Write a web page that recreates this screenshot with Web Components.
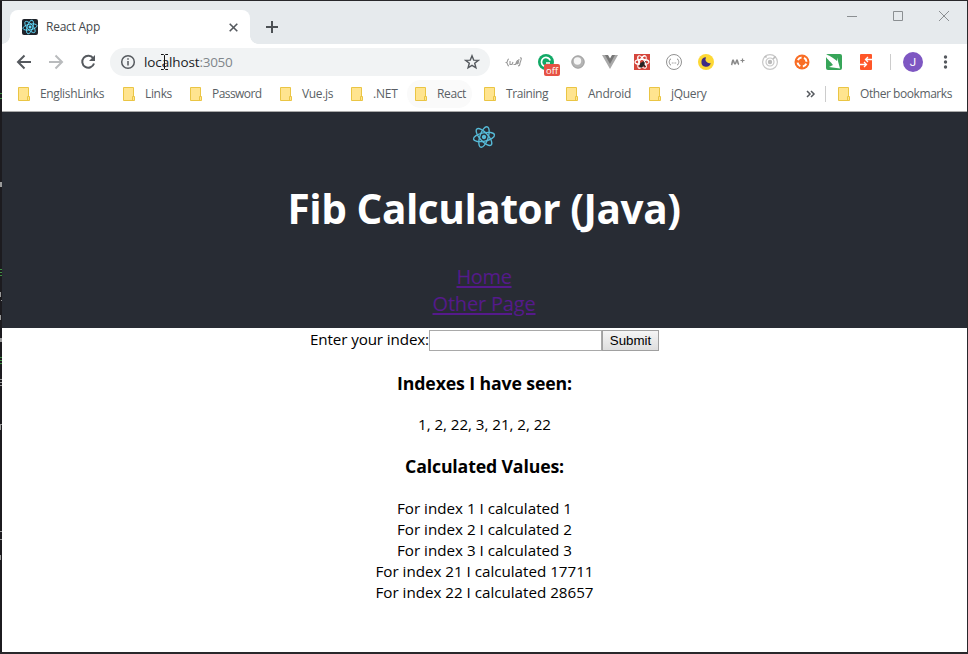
<!DOCTYPE html>
<html lang="en">
<head>
<meta charset="utf-8">
<title>React App</title>
<style>
html,body{margin:0;padding:0;width:968px;height:654px;overflow:hidden;background:#1e1e22;font-family:"Open Sans","Noto Sans",sans-serif}
</style>
</head>
<body>
<browser-window>
  <tab-strip slot="chrome"></tab-strip>
  <tool-bar slot="chrome"></tool-bar>
  <bookmark-bar slot="chrome"></bookmark-bar>
  <fib-app></fib-app>
</browser-window>
<script>
const define = (name, html, setup) => customElements.define(name, class extends HTMLElement {
  connectedCallback() {
    if (this.shadowRoot) return;
    const t = document.createElement('template');
    t.innerHTML = html;
    this.attachShadow({mode: 'open'}).append(t.content.cloneNode(true));
    if (setup) setup(this);
  }
});

/* One line of text, tracked so that it spans the width given in "w". */
define('fit-text', `<style>:host{display:inline-block;white-space:nowrap;vertical-align:top}span{display:inline-block;text-decoration:var(--line,none);text-decoration-thickness:2px;text-underline-offset:2px}</style><span><slot></slot></span>`, el => {
  const w = +el.getAttribute('w'), s = el.shadowRoot.querySelector('span');
  const n = el.textContent.length, natural = s.getBoundingClientRect().width;
  s.style.letterSpacing = ((w - natural) / n) + 'px';
  el.style.width = w + 'px';
});

define('react-logo', `<style>:host{display:block}svg{display:block;width:100%;height:100%}</style>
<svg viewBox="-12 -12 24 24" fill="none" stroke="#61dafb" stroke-width="1.35"><g transform="rotate(-12)"><circle r="2.2" fill="#61dafb" stroke="none"/><ellipse rx="10.7" ry="4.2"/><ellipse rx="10.7" ry="4.2" transform="rotate(60)"/><ellipse rx="10.7" ry="4.2" transform="rotate(120)"/></g></svg>`);

define('browser-window', `<style>
:host{display:grid;grid-template-columns:2px 965px 1px;grid-template-rows:1px 651px 2px;width:968px;height:654px;background:#29282b}
svg{grid-row:2;grid-column:1;display:block}
.win{grid-row:2;grid-column:2;display:flex;flex-direction:column;background:#fff;overflow:hidden}
</style>
<svg width="2" height="651" fill="#9a9a9a"><path fill="#1c1b1f" d="M0 0h2v651H0z"/><path fill="#3f8f43" d="M0 92h2v1H0zM0 97h2v1H0zM0 268h2v1H0zM0 271h2v1H0zM0 274h2v1H0zM0 356h2v1H0zM0 359h2v1H0zM0 362h2v1H0z"/><path d="M0 181h2v5H0zM0 291h1v5H0zM1 299h1v1H1zM0 314h1v5H0zM0 337h2v4H0zM0 378h2v1H0zM0 381h2v1H0zM0 384h2v1H0zM0 423h2v1H0zM0 424h1v5H0zM0 530h2v1H0zM0 538h2v1H0zM0 554h1v5H0z"/></svg>
<div class="win"><slot name="chrome"></slot><slot></slot></div>`);

define('tab-strip', `<style>
:host{display:flex;align-items:flex-end;height:43px;flex:none;background:#e6eaed;border-top:0}
.tab{margin-left:8px;width:240px;height:34px;box-sizing:border-box;background:#fff;border-radius:8px 8px 0 0;display:flex;align-items:center;padding:0 12px;position:relative;color:#45494d;font-size:12px;line-height:34px}
.tab:before,.tab:after{content:"";position:absolute;bottom:0;width:8px;height:8px}
.tab:before{left:-8px;background:radial-gradient(circle at 0 0,transparent 7.5px,#fff 8px)}
.tab:after{right:-8px;background:radial-gradient(circle at 100% 0,transparent 7.5px,#fff 8px)}
.fav{width:16px;height:16px;background:#20232a;border-radius:2px;margin-right:8px}
.close{margin-left:auto;display:block}
.plus{margin:0 0 10px 15px}
.ctl{margin-left:auto;align-self:flex-start;display:block}
</style>
<div class="tab"><react-logo class="fav"></react-logo><fit-text w="54">React App</fit-text>
<svg class="close" width="9" height="9" stroke="#55595e" stroke-width="1.6"><path d="M.7.7l7.6 7.6M8.3.7L.7 8.3"/></svg></div>
<svg class="plus" width="14" height="14" stroke="#4c5054" stroke-width="2"><path d="M7 1v12M1 7h12"/></svg>
<svg class="ctl" width="121" height="30" fill="none" stroke="#8b8f92"><path d="M1 15.5h10M47.5 10.5h9v9h-9zM93 10l10 10M103 10L93 20"/></svg>`);

define('extension-row', `<style>:host{display:flex}svg{display:block;width:32px;height:28px;flex:none;overflow:visible}text{font-family:"Open Sans",sans-serif}</style>
<svg viewBox="-16 -14 32 28" fill="none" stroke="#999" stroke-width="1.1"><path d="M-5-3c-2 0-1 3-2.500 3.500C-6 1-7 4-5 4M6-4c3-1 0 4 0 5 0 2-1 3-2 3M-4-1v3.500h2l1-2.500M-.5 2.500h2L3-1M3.500-2L3 2.500M5-3L4 2"/></svg>
<svg viewBox="-16 -14 32 28"><circle r="8" fill="#11a966"/><path d="M4.200-1.500A4.500 4.500 0 1 0 2 4M0 1h4" fill="none" stroke="#fff" stroke-width="1.700"/><rect x="-2" y="2" width="16" height="12" rx="2" fill="#e65244"/><text x="0" y="11.500" font-size="9.500" fill="#fff" textLength="12" lengthAdjust="spacingAndGlyphs">off</text></svg>
<svg viewBox="-16 -14 32 28"><circle r="6.500" fill="#b4b4b4"/><circle r="6.200" fill="none" stroke="#999" stroke-width=".8"/><circle cx="-.5" cy="-1" r="3.700" fill="#f6f6f6"/></svg>
<svg viewBox="-16 -14 32 28"><path d="M-8-7h4L0 0l4-7h4L0 7z" fill="#a9a9a9"/><path d="M-5-7h3L0-3.500 2-7h3L0 2z" fill="#777"/></svg>
<svg viewBox="-16 -14 32 28"><path d="M-8-8H8V8H-8z" fill="#d5453b"/><g fill="none" stroke="#fff" stroke-width="1.200"><ellipse rx="7" ry="2.600"/><ellipse rx="7" ry="2.600" transform="rotate(60)"/><ellipse rx="7" ry="2.600" transform="rotate(120)"/></g><ellipse cx="1.500" cy="2.500" rx="2" ry="3" transform="rotate(35)" fill="#222"/><path d="M-2 1l6 4M4-1L-1 5M1-1l2 6" stroke="#222" stroke-width=".8"/></svg>
<svg viewBox="-16 -14 32 28" fill="none" stroke="#929292"><circle r="7.500"/><path d="M-3-3c-2 0-1 2.500-2.200 3C-4 .5-5 3-3 3M3-3c2 0 1 2.500 2.200 3C4 .5 5 3 3 3M-2.200 1h1M-.5 1h1M1.200 1h1"/></svg>
<svg viewBox="-16 -14 32 28"><circle r="8" fill="#fdd835"/><path d="M0-4.700A4.700 4.700 0 1 0 4.700 1 4 4 0 0 1 0-4.700z" fill="#3e2b85"/></svg>
<svg viewBox="-16 -14 32 28" fill="none" stroke="#888" stroke-width="1.600"><path d="M-6.500 3c.8-1 .8-5 1.500-5s1 4 2 4 1.300-4 2-4 .5 4 2 4.500"/><path d="M4.500-3.500v4M2.500-1.500h4" stroke-width="1.200"/></svg>
<svg viewBox="-16 -14 32 28" fill="none" stroke="#c8c8c8" stroke-width="1.200"><circle r="7.400"/><circle r="4"/><circle r="2.200" fill="#bbb" stroke="none"/><path d="M-5-6l1.500 1.500M5.500-5.500L3-3" stroke="#bbb" stroke-width="1.600"/></svg>
<svg viewBox="-16 -14 32 28"><circle r="7.500" fill="#f96d24"/><circle r="4.500" fill="none" stroke="#fff" stroke-width="2" stroke-dasharray="4.500 2.570" transform="rotate(20)"/></svg>
<svg viewBox="-16 -14 32 28"><rect x="-8" y="-8" width="16" height="16" rx="2" fill="#37a559"/><path d="M-8-7.500C-3-6 0-3 3-1V-4.500L6 6.500-5 5-1 3C-3 0-7-3-8-5z" fill="#fff"/></svg>
<svg viewBox="-16 -14 32 28"><rect x="-6" y="-8" width="12" height="16" rx="1" fill="#ff5628"/><path d="M6-2.500H0M2-5L-.5-2.500 2 0M-6 2.500H0M-2 0L.5 2.500-2 5" fill="none" stroke="#fff" stroke-width="1.300"/></svg>`);

define('tool-bar', `<style>
:host{display:flex;align-items:center;height:36px;flex:none;background:#fff}
svg{display:block;flex:none}
.nav{margin-left:14px}
.omni{margin-left:12px;width:380px;height:28px;border-radius:14px;background:#f1f3f4;box-sizing:border-box;display:flex;align-items:center;padding:0 10px;font-size:13.500px;line-height:28px;color:#202124;position:relative}
.omni fit-text{margin-top:-1px}.info{margin-right:8px}.port{color:#80868b}.star{margin-left:auto}
.caret{position:absolute;left:51px;top:6px}
extension-row{margin-left:8px}
.sep{width:1px;height:16px;background:#ccc;margin-left:8px}
.av{width:20px;height:20px;border-radius:50%;background:#7e57c2;color:#fff;font:11.500px/20px Roboto,sans-serif;text-align:center;margin-left:12px}
.dots{margin-left:10px}
</style>
<svg class="nav" width="82" height="20" fill="none" stroke="#55595e" stroke-width="2"><path d="M15 10H2.500M8.500 3.500L2 10l6.500 6.500"/><path stroke="#b9bbbd" d="M33 10h12.500M39.500 3.500L46 10l-6.500 6.500"/><path d="M77.200 6.300A6 6 0 1 0 78 11.500"/><path d="M79 3v6h-6z" fill="#55595e" stroke="none"/></svg>
<div class="omni"><svg class="info" width="16" height="16" fill="none" stroke="#55595e" stroke-width="1.500"><circle cx="8" cy="8" r="6.300"/><path d="M8 7v4.500M8 4.200v1.600"/></svg><fit-text w="55.500">localhost</fit-text><fit-text class="port" w="33">:3050</fit-text>
<svg class="star" width="16" height="16" fill="none" stroke="#55595e" stroke-width="1.400"><path d="M8 1.800l1.700 4.300 4.600.3-3.600 2.900 1.200 4.500L8 11.300l-3.900 2.500 1.200-4.500-3.600-2.900 4.600-.3z"/></svg>
<svg class="caret" width="7" height="16" fill="none" stroke="#111"><path d="M0 .5h2.500l1 1 1-1H7M3.500 1.500v13M0 15.500h2.500l1-1 1 1H7"/></svg></div>
<extension-row></extension-row><span class="sep"></span><span class="av">J</span>
<svg class="dots" width="24" height="16" fill="#55595e"><circle cx="12.500" cy="3" r="1.700"/><circle cx="12.500" cy="8" r="1.700"/><circle cx="12.500" cy="13" r="1.700"/></svg>`);

define('bookmark-item', `<style>:host{display:flex;align-items:center;flex:none;height:28px;font-size:12px;line-height:28px;color:#5a5f65}svg{display:block;margin-right:10px;flex:none}</style>
<svg width="12" height="14"><path d="M.5.5h10v9l1 1v3H.5z" fill="#ffe48f" stroke="#eac544"/><path d="M9.500 13V9.500h2V13" fill="#ffe48f" stroke="#eac544"/></svg><slot></slot>`);

define('bookmark-bar', `<style>
:host{display:flex;align-items:center;height:32px;box-sizing:border-box;flex:none;background:#fff;border-bottom:1px solid #aaa;padding:0 0 3px 16px}
#list{display:flex}
.more{margin:0 9px 0 auto;display:block}.sep{width:1px;height:16px;background:#ccc;margin-right:12px}
.last{width:129px}.hov{position:relative;isolation:isolate}
.hov:before{content:"";position:absolute;z-index:-1;left:-8px;width:65px;top:0;height:28px;border-radius:14px;background:#fafafa}
</style><div id="list"></div>
<svg class="more" width="10" height="8" fill="none" stroke="#55595e" stroke-width="1.500"><path d="M1 1l3 3-3 3M5 1l3 3-3 3"/></svg><span class="sep"></span><bookmark-item class="last"><fit-text w="92">Other bookmarks</fit-text></bookmark-item>`, el => {
  const items = [['EnglishLinks',64,105],['Links',27,67],['Password',49.5,90],['Vue.js',31,71],['.NET',24.5,64],['React',29,69],['Training',42,82],['Android',43,83],['jQuery',35.5,70]];
  el.shadowRoot.getElementById('list').innerHTML = items.map(([t, w, step]) =>
    `<bookmark-item class="${t === 'React' ? 'hov' : ''}" style="width:${step}px"><fit-text w="${w}">${t}</fit-text></bookmark-item>`).join('');
});

define('fib-app', `<style>
:host{display:block;background:#fff;color:#000;text-align:center;font-size:15.200px;line-height:21px}
header{background:#282c34;height:216px;display:flex;flex-direction:column;align-items:center;color:#fff;padding-right:1px}
react-logo{width:24px;height:24px;margin-top:13px;opacity:.82}
h1{margin:32px 0 0;font-size:40.500px;line-height:56px;height:56px;font-weight:700}
nav{margin-top:26px;display:flex;flex-direction:column;align-items:center;font-size:20px;line-height:27px}
a{--line:underline;color:#551a8b;height:27px;display:block}
form{display:flex;justify-content:center;align-items:flex-start;padding-top:2px;height:21px}
form fit-text{margin-top:-1px}
input{width:173px;height:21px;box-sizing:border-box;border:1px solid #a9a9a9;padding:1px;margin:0;background:#fff}
button{width:57px;height:21px;box-sizing:border-box;border:1px solid #a0a0a0;background:linear-gradient(#f5f5f5,#dedede);font:13.333px/17px "Liberation Sans",sans-serif;color:#000;padding:0;margin:0}
h3{margin:0;font-size:17.700px;line-height:25px;height:25px}
.list div,.seen{height:21px}
</style>
<header><react-logo></react-logo><h1><fit-text w="393">Fib Calculator (Java)</fit-text></h1>
<nav><a><fit-text w="55">Home</fit-text></a><a><fit-text w="103">Other Page</fit-text></a></nav></header>
<form><fit-text w="119">Enter your index:</fit-text><input aria-label="index"><button type="button">Submit</button></form>
<h3 style="margin-top:20px"><fit-text w="175">Indexes I have seen:</fit-text></h3>
<div class="seen" style="margin-top:18px"><fit-text w="133">1, 2, 22, 3, 21, 2, 22</fit-text></div>
<h3 style="margin-top:19px"><fit-text w="159">Calculated Values:</fit-text></h3>
<div class="list" style="margin-top:19px">
<div><fit-text w="175">For index 1 I calculated 1</fit-text></div><div><fit-text w="175">For index 2 I calculated 2</fit-text></div><div><fit-text w="175">For index 3 I calculated 3</fit-text></div><div><fit-text w="218">For index 21 I calculated 17711</fit-text></div><div><fit-text w="218">For index 22 I calculated 28657</fit-text></div></div>`);
</script>
</body>
</html>
